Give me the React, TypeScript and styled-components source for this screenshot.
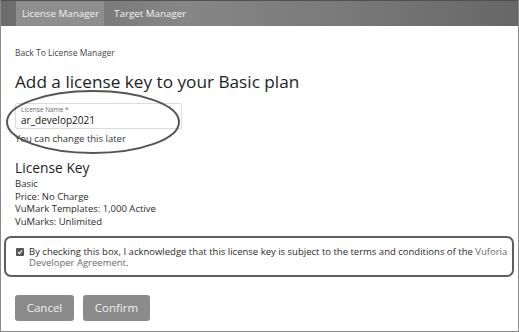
import React from 'react'
import styled, { createGlobalStyle } from 'styled-components'

const GlobalStyle = createGlobalStyle`
  html, body {
    margin: 0;
    padding: 0;
    background: #fff;
  }
  body {
    font-family: "Open Sans", "Liberation Sans", sans-serif;
    color: #2a2a2a;
  }
`

const Frame = styled.div`
  position: relative;
  width: 519px;
  height: 332px;
  box-sizing: border-box;
  border: 1px solid #8a8a8a;
  border-top: none;
  background: #fff;
  overflow: hidden;
`

const TopBar = styled.nav`
  display: flex;
  height: 26px;
  padding-left: 15px;
  border-top: 1px solid #505050;
  box-sizing: border-box;
  background: linear-gradient(90deg, #6c6c6c 0%, #868686 35%, #7a7a7a 65%, #676767 100%);
`

const Tab = styled.div<{ $active?: boolean }>`
  display: flex;
  align-items: center;
  padding: 0 5px 0 6px;
  font-size: 9.8px;
  color: #f2f2f2;
  background: ${({ $active }) => ($active ? '#8e8e8e' : 'transparent')};
  margin-right: ${({ $active }) => ($active ? '4px' : '0')};
`

const Content = styled.main`
  display: flex;
  flex-direction: column;
  padding: 21px 14px 0 14px;
`

const BackLink = styled.a`
  font-size: 8.5px;
  color: #444;
  text-decoration: none;
  line-height: 12px;
`

const Title = styled.h1`
  margin: 11px 0 0 0;
  font-size: 17.2px;
  font-weight: 400;
  line-height: 24px;
  color: #1e1e1e;
`

const NameField = styled.div`
  position: relative;
  margin-top: 9px;
  width: 167px;
  height: 26px;
  box-sizing: border-box;
  border: 1px solid #dcdcdc;
  border-radius: 2px;
  padding: 2px 5px 0 5px;
  display: flex;
  flex-direction: column;
`

const FieldLabel = styled.label`
  font-size: 6.5px;
  line-height: 8px;
  color: #666;
`

const FieldValue = styled.span`
  font-size: 10px;
  line-height: 13px;
  color: #111;
`

const Hint = styled.span`
  font-size: 9.5px;
  line-height: 13px;
  margin-top: 3px;
  color: #333;
`

const Ellipse = styled.svg`
  position: absolute;
  left: 3px;
  top: 89px;
  pointer-events: none;
`

const SectionTitle = styled.h2`
  margin: 13px 0 0 0;
  font-size: 13.8px;
  font-weight: 500;
  line-height: 19px;
  color: #1e1e1e;
`

const Details = styled.div`
  display: flex;
  flex-direction: column;
  margin-top: 1px;
  font-size: 9.5px;
  line-height: 12.7px;
  color: #2a2a2a;
`

const AgreeBox = styled.div`
  display: flex;
  align-items: flex-start;
  gap: 5px;
  margin: 7px -10px 0 -11px;
  padding: 8px 4px 6px 10px;
  border: 2px solid #5e5e5e;
  border-radius: 7px;
  font-size: 9.5px;
  line-height: 11.5px;
  color: #2a2a2a;
`

const Check = styled.span`
  flex: none;
  width: 8px;
  height: 8px;
  margin-top: 2px;
  border-radius: 1px;
  background: #555;
  display: flex;
  align-items: center;
  justify-content: center;
`

const AgreeLink = styled.a`
  color: #6a6a6a;
  text-decoration: none;
`

const Actions = styled.div`
  display: flex;
  gap: 9px;
  margin-top: 18px;
`

const Button = styled.button<{ $width: number }>`
  width: ${({ $width }) => $width}px;
  height: 26px;
  border: none;
  border-radius: 3px;
  background: #8b8b8b;
  color: #f0f0f0;
  font-family: "Open Sans", "Liberation Sans", sans-serif;
  font-size: 11.5px;
  padding: 0;
`

export default function App() {
  return (
    <>
      <GlobalStyle />
      <Frame>
        <TopBar>
          <Tab $active>License Manager</Tab>
          <Tab>Target Manager</Tab>
        </TopBar>
        <Content>
          <BackLink href="#">Back To License Manager</BackLink>
          <Title>Add a license key to your Basic plan</Title>
          <NameField>
            <FieldLabel>License Name *</FieldLabel>
            <FieldValue>ar_develop2021</FieldValue>
          </NameField>
          <Hint>You can change this later</Hint>
          <SectionTitle>License Key</SectionTitle>
          <Details>
            <span>Basic</span>
            <span>Price: No Charge</span>
            <span>VuMark Templates: 1,000 Active</span>
            <span>VuMarks: Unlimited</span>
          </Details>
          <AgreeBox>
            <Check>
              <svg width="6" height="6" viewBox="0 0 6 6">
                <path d="M1 3.2 L2.4 4.6 L5 1.4" fill="none" stroke="#fff" strokeWidth="1.1" />
              </svg>
            </Check>
            <span>
              By checking this box, I acknowledge that this license key is subject to the terms and conditions of the{' '}
              <AgreeLink href="#">Vuforia Developer Agreement</AgreeLink>.
            </span>
          </AgreeBox>
          <Actions>
            <Button $width={59}>Cancel</Button>
            <Button $width={67}>Confirm</Button>
          </Actions>
        </Content>
        <Ellipse width="180" height="68" viewBox="0 0 180 68">
          <ellipse cx="89" cy="33" rx="86" ry="31" fill="none" stroke="#555" strokeWidth="2" />
        </Ellipse>
      </Frame>
    </>
  )
}
